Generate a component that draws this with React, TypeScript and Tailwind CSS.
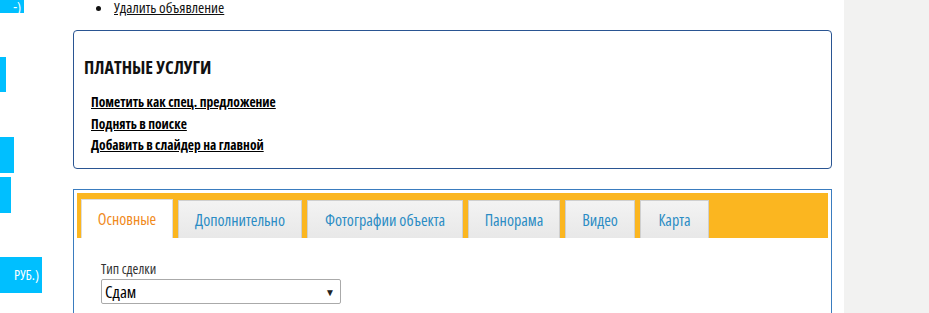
import React from 'react';

const sideButtons = [
  { cls: 'w-[24px] h-[13px] mt-0 items-center', text: '-)' },
  { cls: 'w-[6px] h-[35px] mt-[44px] items-center', text: '' },
  { cls: 'w-[14px] h-[36px] mt-[45px] items-center', text: '' },
  { cls: 'w-[11px] h-[36px] mt-[4px] items-center', text: '' },
  { cls: 'w-[42px] h-[36px] mt-[44px] items-center', text: 'РУБ.)' },
];

const paidLinks = ['Пометить как спец. предложение', 'Поднять в поиске', 'Добавить в слайдер на главной'];

const tabs = [
  { label: 'Основные', w: 'w-[92px]' },
  { label: 'Дополнительно', w: 'w-[124px]' },
  { label: 'Фотографии объекта', w: 'w-[156px]' },
  { label: 'Панорама', w: 'w-[92px]' },
  { label: 'Видео', w: 'w-[70px]' },
  { label: 'Карта', w: 'w-[69px]' },
];

export default function App() {
  return (
    <div className="w-[929px] h-[313px] overflow-hidden flex bg-white text-[#111] font-['Open_Sans',sans-serif] font-stretch-condensed">
      {/* left sidebar, mostly off screen */}
      <div className="w-[73px] shrink-0 flex flex-col items-start">
        {sideButtons.map((b, i) => (
          <div
            key={i}
            className={`${b.cls} bg-[#00bfff] text-white text-[14px] flex justify-end pr-[3px] overflow-hidden leading-none`}
          >
            {b.text}
          </div>
        ))}
      </div>

      {/* main column */}
      <div className="w-[759px] shrink-0 flex flex-col">
        <ul className="list-disc pl-[40px] text-[15px] leading-[15px]">
          <li className="pl-[1px]">
            <a className="underline text-[#111]">Удалить объявление</a>
          </li>
        </ul>

        <div className="mt-[15px] h-[139px] shrink-0 border border-[#2a5592] rounded-[4px] pl-[10px] pt-[25px]">
          <h2 className="text-[18px] font-bold leading-[22px] text-[#111]">ПЛАТНЫЕ УСЛУГИ</h2>
          <div className="mt-[14px] pl-[7px] flex flex-col">
            {paidLinks.map((l) => (
              <a key={l} className="text-[13.5px] font-bold underline leading-[21.5px] text-black self-start">
                {l}
              </a>
            ))}
          </div>
        </div>

        <div className="mt-[20px] flex-1 border border-b-0 border-[#3a7cbf] px-[3px] pt-[3px]">
          <div className="bg-[#fbb620] h-[45px] flex items-end gap-[5px] pl-[4px]">
            {tabs.map((t, i) =>
              i === 0 ? (
                <div
                  key={t.label}
                  className={`${t.w} h-[39px] bg-white border border-b-0 border-[#ddd] flex items-center justify-center text-[16px] text-[#f08a1c]`}
                >
                  {t.label}
                </div>
              ) : (
                <div
                  key={t.label}
                  className={`${t.w} h-[38px] bg-gradient-to-b from-[#f3f3f3] to-[#e8e8e8] border border-b-0 border-[#cfcfcf] flex items-center justify-center text-[16px] text-[#2b8cc4]`}
                >
                  {t.label}
                </div>
              )
            )}
          </div>

          <div className="pl-[24px] pt-[22px]">
            <div className="text-[14px] leading-[18px] text-[#333]">Тип сделки</div>
            <div className="mt-[1px] w-[240px] h-[25px] border border-[#aaa] rounded-[2px] flex items-center justify-between pl-[3px] pr-[5px]">
              <span className="text-[17px] text-black leading-none">Сдам</span>
              <span className="text-[10px] text-[#222] leading-none">▼</span>
            </div>
          </div>
        </div>
      </div>

      <div className="w-[12px] shrink-0" />
      <div className="flex-1 bg-[#f2f2f1]" />
    </div>
  );
}
